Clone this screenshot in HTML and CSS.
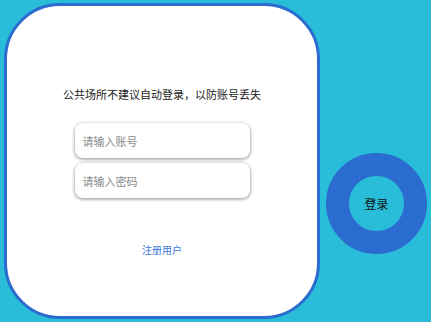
FILE: index.html
```html
<!DOCTYPE html>
<html lang="zh">
<head>
<meta charset="utf-8">
<link rel="stylesheet" href="styles.css">
</head>
<body>
<div class="page">
  <div class="card">
    <p class="notice">公共场所不建议自动登录，以防账号丢失</p>
    <div class="fields">
      <div class="field">请输入账号</div>
      <div class="field">请输入密码</div>
    </div>
    <a class="register">注册用户</a>
  </div>
  <div class="login-ring">
    <div class="login-inner">登录</div>
  </div>
</div>
</body>
</html>
```
FILE: styles.css
```css
html, body {
  margin: 0;
  padding: 0;
  background: #2abdd9;
  font-family: "Noto Sans CJK SC", "Noto Sans", sans-serif;
}
.page {
  display: flex;
  align-items: flex-start;
  padding: 3px 0 0 4px;
}
.card {
  box-sizing: border-box;
  width: 316px;
  height: 316px;
  background: #fff;
  border: 3px solid #2a6ccf;
  border-radius: 56px;
  display: flex;
  flex-direction: column;
  align-items: center;
  padding-top: 80px;
}
.notice {
  margin: 0;
  font-size: 11px;
  line-height: 16px;
  color: #222;
}
.fields {
  margin-top: 21px;
  display: flex;
  flex-direction: column;
  gap: 5px;
}
.field {
  box-sizing: border-box;
  width: 175px;
  height: 35px;
  border-radius: 8px;
  background: #fff;
  box-shadow: 0 1px 3px 1px rgba(0, 0, 0, 0.3);
  padding-left: 8px;
  display: flex;
  align-items: center;
  font-size: 11px;
  color: #8a8a8a;
}
.register {
  margin-top: 45px;
  font-size: 10px;
  line-height: 14px;
  color: #3a78d8;
}
.login-ring {
  box-sizing: border-box;
  width: 101px;
  height: 101px;
  margin: 150px 0 0 6px;
  border-radius: 50%;
  border: 23px solid #2a6ccf;
  background: #2abdd9;
  display: flex;
  align-items: center;
  justify-content: center;
}
.login-inner {
  font-size: 12px;
  color: #111;
}
```
